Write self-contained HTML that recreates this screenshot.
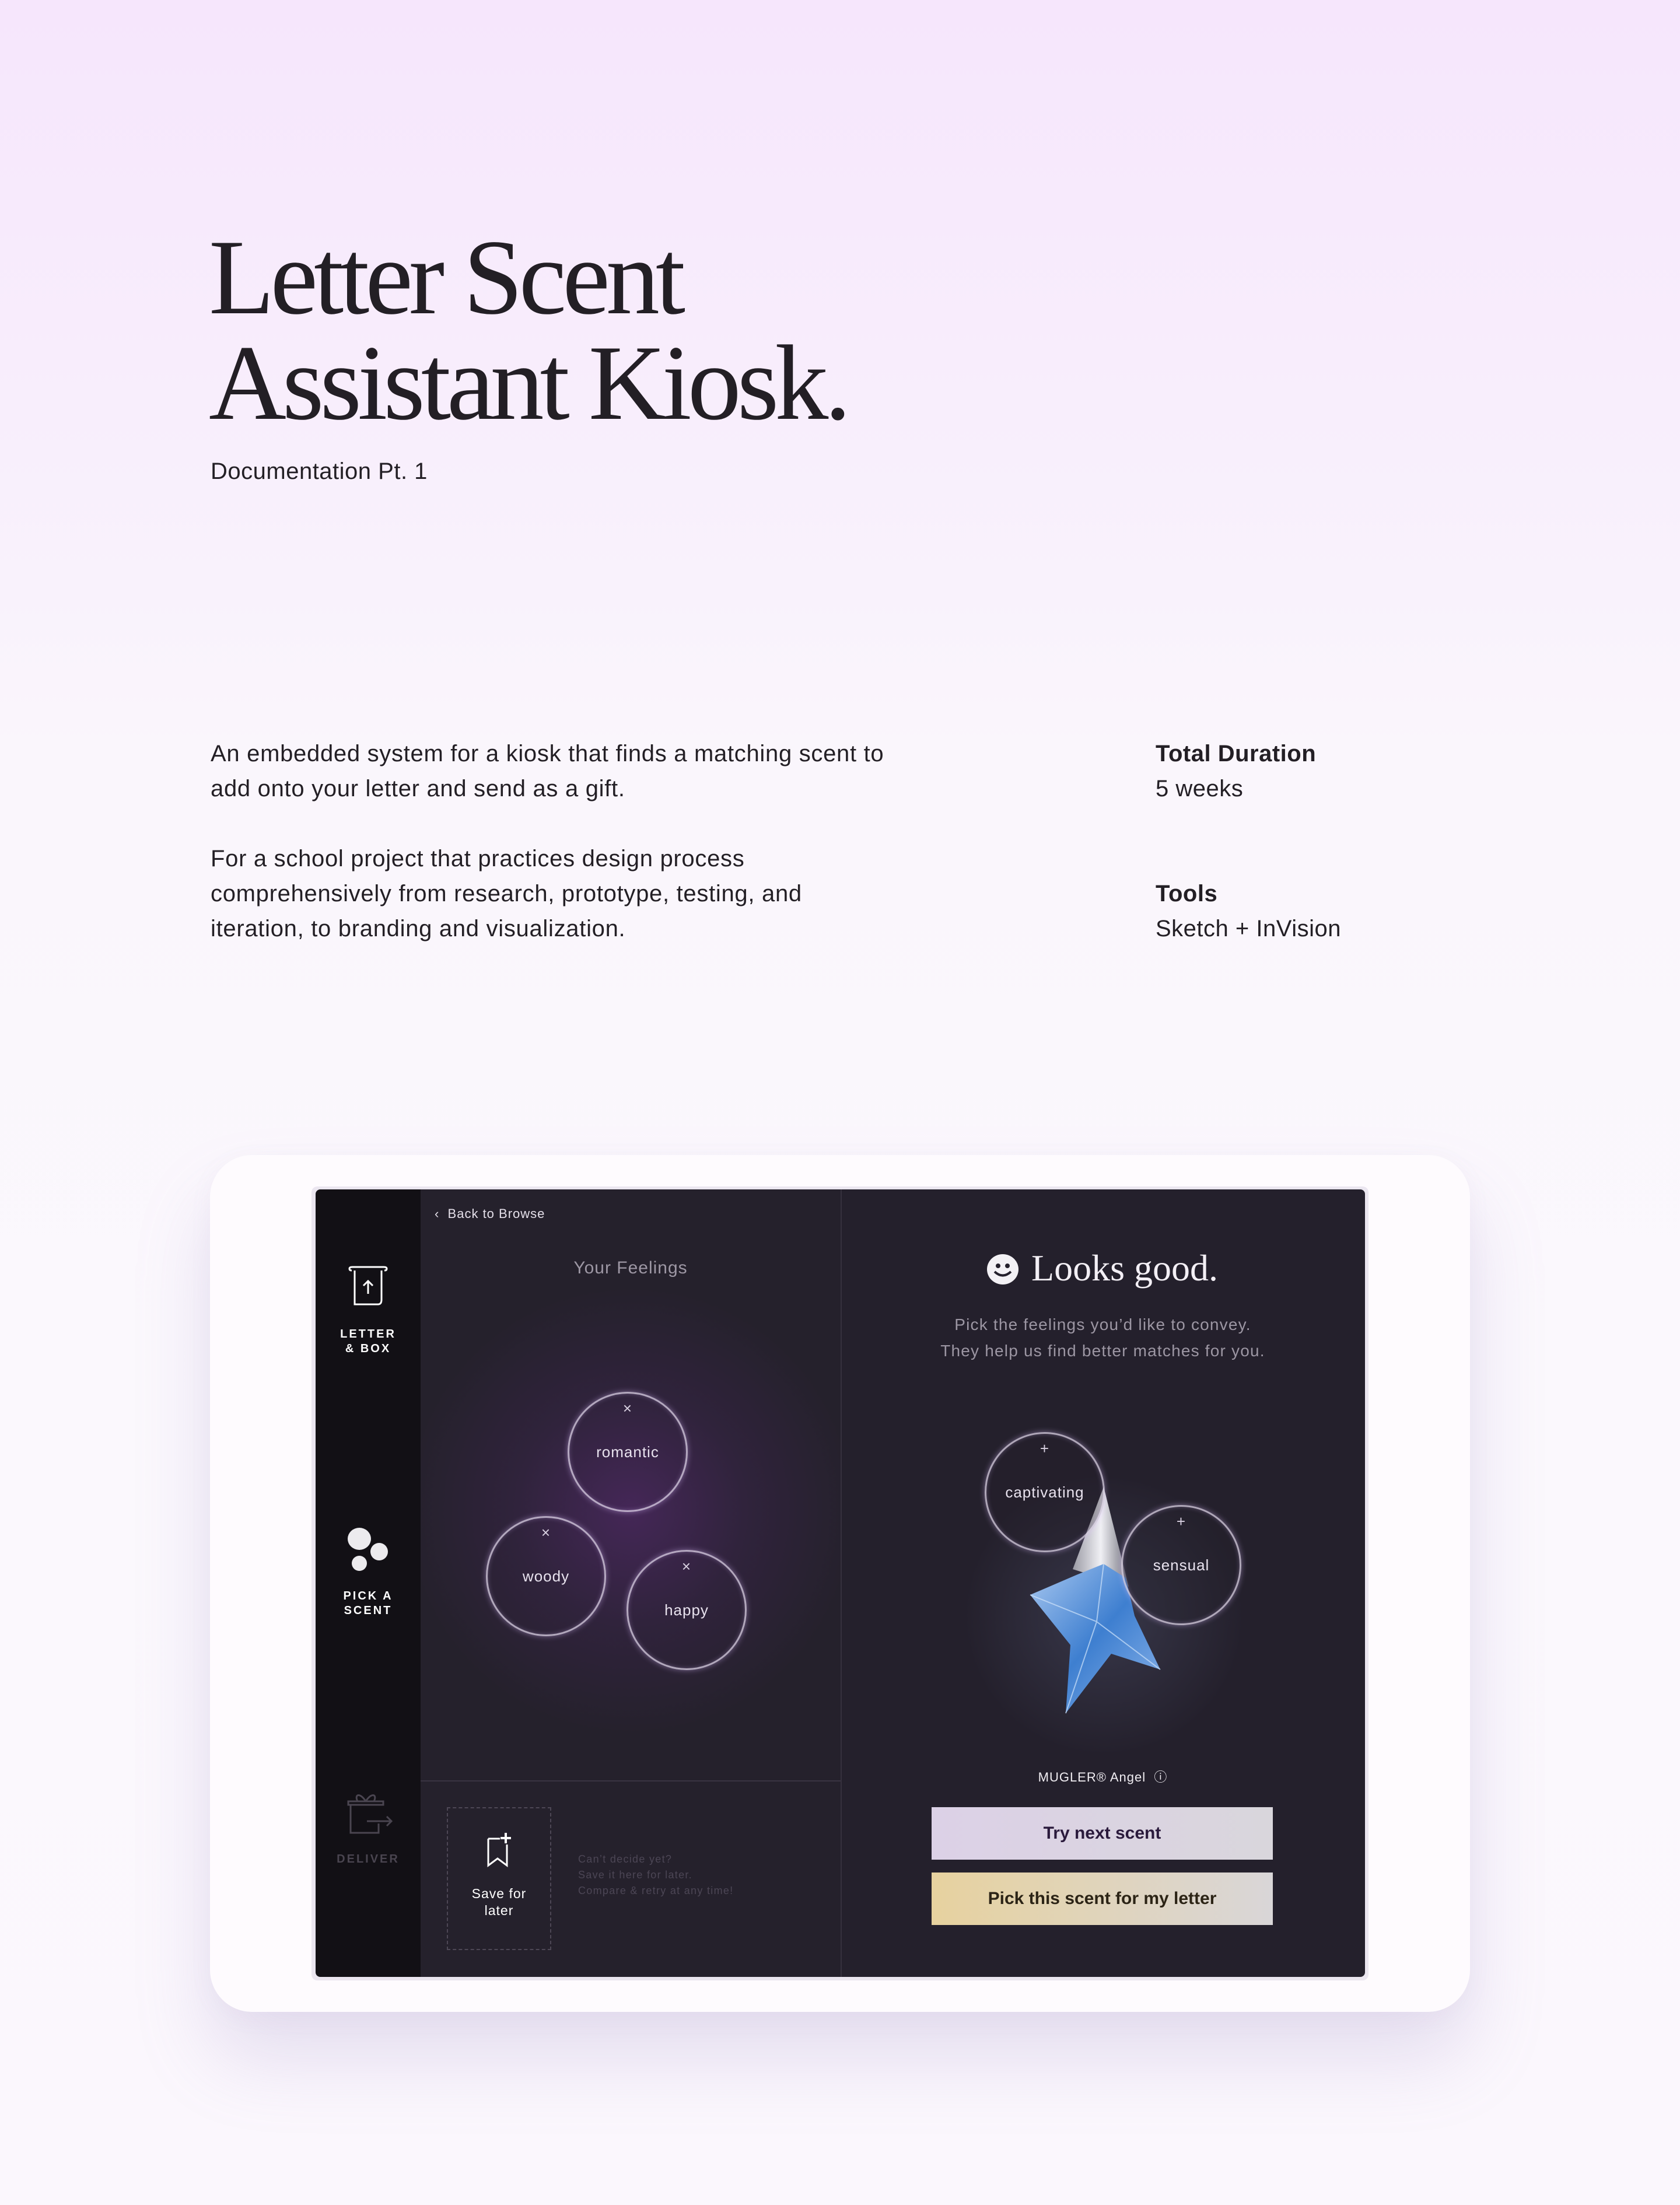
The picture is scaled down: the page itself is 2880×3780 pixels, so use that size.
<!DOCTYPE html>
<html><head><meta charset="utf-8"><style>
*{margin:0;padding:0;box-sizing:border-box}
body{width:2880px;height:3780px;position:relative;overflow:hidden;font-family:"Liberation Sans",sans-serif;
background:linear-gradient(180deg,#f6e6fc 0px,#f8eefc 700px,#faf6fc 1300px,#fbf8fd 2400px,#fbf7fd 3780px);}
.a{position:absolute}
.title{left:358px;top:385px;font-family:"Liberation Serif",serif;font-size:184px;line-height:181px;color:#231f25;letter-spacing:-7px;}
.sub{left:361px;top:786px;font-size:40px;color:#231f25;letter-spacing:.5px}
.body{left:361px;top:1262px;font-size:40px;line-height:60px;color:#231f25;letter-spacing:.7px}
.r{left:1981px;font-size:40px;line-height:60px;color:#231f25;letter-spacing:.5px}
.card{left:360px;top:1980px;width:2160px;height:1469px;border-radius:72px;background:#fefbfe;box-shadow:0 80px 140px rgba(150,130,190,.22),0 10px 40px rgba(150,130,190,.06)}
.screen{left:534px;top:2034px;width:1812px;height:1361px;border-radius:10px;background:#ebe6f0;}
.sb{left:541px;top:2039px;width:180px;height:1350px;background:#121015;border-radius:8px 0 0 8px}
.lp{left:721px;top:2039px;width:720px;height:1350px;background:#25212c;overflow:hidden}
.rp{left:1441px;top:2039px;width:899px;height:1350px;background:#24202c;border-left:2px solid #35303d;border-radius:0 8px 8px 0;overflow:hidden}
.st{color:#fff;font-size:20px;font-weight:bold;letter-spacing:3px;text-align:center;line-height:25px;width:180px;left:541px}
.c{border-radius:50%;width:206px;height:206px;border:3px solid rgba(235,225,245,.7);box-shadow:0 0 10px rgba(220,190,255,.45),inset 0 0 8px rgba(220,190,255,.3);display:flex;align-items:center;justify-content:center;color:#e8e2ee;font-size:26px;letter-spacing:1px}
.x{position:absolute;top:10px;left:0;width:100%;text-align:center;font-size:26px;color:#d8d0e0}
.btn{left:1597px;width:585px;height:90px;display:flex;align-items:center;justify-content:center;font-size:30px;font-weight:bold}
</style></head><body>
<div class="a title">Letter Scent<br>Assistant Kiosk.</div>
<div class="a sub">Documentation Pt. 1</div>
<div class="a body">An embedded system for a kiosk that finds a matching scent to<br>add onto your letter and send as a gift.<br><br>For a school project that practices design process<br>comprehensively from research, prototype, testing, and<br>iteration, to branding and visualization.</div>
<div class="a r" style="top:1262px"><b>Total Duration</b><br>5 weeks</div>
<div class="a r" style="top:1502px"><b>Tools</b><br>Sketch + InVision</div>

<div class="a card"></div>
<div class="a screen"></div>
<div class="a sb"></div>
<div class="a lp">
  <div class="a" style="left:-40px;top:150px;width:800px;height:800px;border-radius:50%;background:radial-gradient(circle,rgba(100,45,130,.5) 0%,rgba(75,40,100,.28) 35%,rgba(37,33,44,0) 68%)"></div>
  <div class="a" style="left:0;top:1013px;width:720px;height:2px;background:#3a3442"></div>
</div>
<div class="a rp">
  <div class="a" style="left:200px;top:480px;width:500px;height:500px;border-radius:50%;background:radial-gradient(circle,rgba(70,72,95,.6) 0%,rgba(36,32,44,0) 68%)"></div>
</div>

<!-- sidebar -->
<svg class="a" style="left:596px;top:2170px" width="70" height="70" viewBox="0 0 70 70" fill="none" stroke="#fff" stroke-width="3">
<path d="M3 5 Q3 2 8 2 H62 Q67 2 67 5 Q67 8 63 8"/><path d="M3 5 Q3 8 7 8"/><path d="M12 8 V66 H52 Q58 66 58 58 V8"/><path d="M35 48 V26 M27 34 L35 26 L43 34"/></svg>
<div class="a st" style="top:2275px">LETTER<br>&amp; BOX</div>
<svg class="a" style="left:594px;top:2618px" width="72" height="75"><ellipse cx="22" cy="20" rx="20" ry="19" fill="#ecebee"/><ellipse cx="56" cy="42" rx="15" ry="15" fill="#ecebee"/><ellipse cx="22" cy="62" rx="13" ry="13" fill="#ecebee"/></svg>
<div class="a st" style="top:2724px">PICK A<br>SCENT</div>
<svg class="a" style="left:593px;top:3064px" width="82" height="82" fill="none" stroke="#4a4550" stroke-width="3"><path d="M4 24 H64 V30 H4 Z"/><path d="M8 30 V78 H56 V62"/><path d="M34 24 C24 8 14 12 20 24 M34 24 C44 8 54 12 48 24"/><path d="M36 58 H78 M70 50 L78 58 L70 66"/></svg>
<div class="a st" style="top:3175px;color:#4a4550">DELIVER</div>

<!-- left panel -->
<div class="a" style="left:745px;top:2068px;color:#e5e0ea;font-size:22px;letter-spacing:1px">&lsaquo;&nbsp;&nbsp;Back to Browse</div>
<div class="a" style="left:921px;top:2157px;width:320px;text-align:center;color:#9d97a4;font-size:30px;letter-spacing:1px">Your Feelings</div>
<div class="a c" style="left:973px;top:2386px"><span class="x">×</span>romantic</div>
<div class="a c" style="left:833px;top:2599px"><span class="x">×</span>woody</div>
<div class="a c" style="left:1074px;top:2657px"><span class="x">×</span>happy</div>
<div class="a" style="left:766px;top:3098px;width:179px;height:245px;border:2px dashed #4d4755"></div>
<svg class="a" style="left:831px;top:3142px" width="50" height="60" fill="none" stroke="#fff" stroke-width="3"><path d="M6 10 H26 M38 20 V56 L22 44 L6 56 V10"/><path d="M36 0 V18 M27 9 H45" stroke-width="4"/></svg>
<div class="a" style="left:766px;top:3232px;width:179px;text-align:center;color:#fff;font-size:23px;line-height:29px;letter-spacing:1px">Save for<br>later</div>
<div class="a" style="left:991px;top:3174px;color:#4c4655;font-size:18px;line-height:27px;letter-spacing:1.3px">Can’t decide yet?<br>Save it here for later.<br>Compare &amp; retry at any time!</div>

<!-- right panel -->
<svg class="a" style="left:1691px;top:2149px" width="56" height="54"><ellipse cx="28" cy="27" rx="27" ry="26" fill="#f3f1f5"/><circle cx="20" cy="21" r="4" fill="#24202c"/><circle cx="36" cy="21" r="4" fill="#24202c"/><path d="M14 31 Q28 44 42 31" stroke="#24202c" stroke-width="4" fill="none"/></svg>
<div class="a" style="left:1768px;top:2134px;font-family:'Liberation Serif',serif;font-size:64px;color:#f3eff5;line-height:80px">Looks good.</div>
<div class="a" style="left:1441px;top:2248px;width:899px;text-align:center;color:#9c96a3;font-size:28px;line-height:45px;letter-spacing:1.2px">Pick the feelings you’d like to convey.<br>They help us find better matches for you.</div>
<svg class="a" style="left:1750px;top:2540px" width="260" height="410" viewBox="1750 2540 260 410">
<defs><linearGradient id="g" x1="0" y1="0" x2="1" y2="1"><stop offset="0" stop-color="#a9c8f0"/><stop offset=".5" stop-color="#3e7fd0"/><stop offset="1" stop-color="#8db5ea"/></linearGradient>
<linearGradient id="s" x1="0" y1="0" x2="1" y2="0"><stop offset="0" stop-color="#9a9aa4"/><stop offset=".5" stop-color="#f0f0f4"/><stop offset="1" stop-color="#6c6c78"/></linearGradient></defs>
<path d="M1892 2549 L1839 2690 L1935 2720 Z" fill="url(#s)"/>
<path d="M1766 2734 L1845 2700 L1892 2681 L1930 2705 L1945 2770 L1989 2862 L1905 2835 L1827 2937 L1835 2820 Z" fill="url(#g)"/>
<path d="M1766 2734 L1880 2780 L1827 2937 M1880 2780 L1989 2862 M1880 2780 L1892 2681" stroke="#cfe2fa" stroke-width="2" fill="none" opacity=".7"/>
</svg>
<div class="a c" style="left:1688px;top:2455px;background:rgba(36,32,44,.35)"><span class="x">+</span>captivating</div>
<div class="a c" style="left:1922px;top:2580px;background:rgba(36,32,44,.3)"><span class="x">+</span>sensual</div>
<div class="a" style="left:1441px;top:3029px;width:899px;text-align:center;color:#f0edf2;font-size:22px;letter-spacing:1px">MUGLER® Angel&nbsp; &#9432;</div>
<div class="a btn" style="top:3098px;background:linear-gradient(90deg,#dcd1e7,#d9d6dc);color:#2a1a3c">Try next scent</div>
<div class="a btn" style="top:3210px;background:linear-gradient(90deg,#e7d29f,#d9d6d8);color:#2c2416">Pick this scent for my letter</div>
</body></html>
